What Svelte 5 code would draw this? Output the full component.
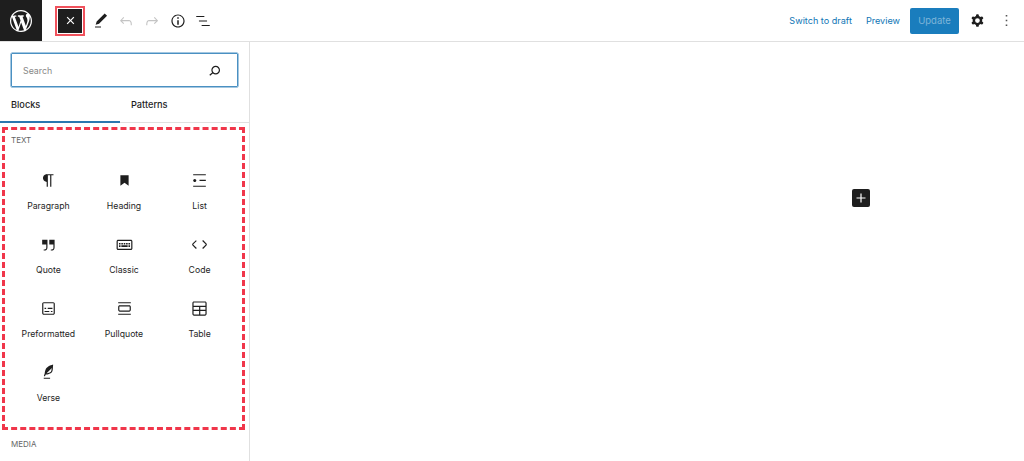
<script>
	const blocks = [
		{ name: 'Paragraph', d: 'M18.3 4H9.9v-.1l-.9.2c-2.3.4-4 2.4-4 4.8s1.7 4.4 4 4.8l.7.1V20h1.5V5.5h2.9V20h1.5V5.5h2.7V4z' },
		{ name: 'Heading', d: 'M6.8 5.500h10.400v13L12 14.900l-5.200 3.600z' },
		{ name: 'List', d: 'M4 4v1.5h16V4H4zm8 8.5h8V11h-8v1.5zM4 20h16v-1.5H4V20zm4-8c0-1.1-.9-2-2-2s-2 .9-2 2 .9 2 2 2 2-.9 2-2z' },
		{ name: 'Quote', d: 'M13 6v6h5.2v4c0 .8-.2 1.4-.5 1.7-.6.6-1.6.6-2.5.5h-.3v1.5h.5c1 0 2.3-.1 3.3-1 .6-.6 1-1.6 1-2.8V6H13zm-9 6h5.2v4c0 .8-.2 1.4-.5 1.7-.6.6-1.6.6-2.5.5h-.3v1.5h.5c1 0 2.3-.1 3.3-1 .6-.6 1-1.6 1-2.8V6H4v6z' },
		{ name: 'Classic', d: 'M20 6H4c-1.1 0-2 .9-2 2v9c0 1.1.9 2 2 2h16c1.1 0 2-.9 2-2V8c0-1.1-.9-2-2-2zm.5 11c0 .3-.2.5-.5.5H4c-.3 0-.5-.2-.5-.5V8c0-.3.2-.5.5-.5h16c.3 0 .5.2.5.5v9zM10 10H8v2h2v-2zm-5 2h2v-2H5v2zm8-2h-2v2h2v-2zm-5 5h8v-2H8v2zm6-3h2v-2h-2v2zm3 0h2v-2h-2v2zm0 3h2v-2h-2v2zM5 15h2v-2H5v2z' },
		{ name: 'Code', d: 'M20.8 10.7l-4.3-4.3-1.1 1.1 4.3 4.3c.1.1.1.3 0 .4l-4.3 4.3 1.1 1.1 4.3-4.3c.7-.8.7-1.9 0-2.6zM4.2 11.8l4.3-4.3-1-1-4.3 4.3c-.7.7-.7 1.8 0 2.5l4.3 4.3 1.1-1.1-4.3-4.3c-.2-.1-.2-.3-.1-.4z' },
		{ name: 'Preformatted', d: 'M18 4H6c-1.1 0-2 .9-2 2v12c0 1.1.9 2 2 2h12c1.1 0 2-.9 2-2V6c0-1.1-.9-2-2-2zm.5 14c0 .3-.2.5-.5.5H6c-.3 0-.5-.2-.5-.5V6c0-.3.2-.5.5-.5h12c.3 0 .5.2.5.5v12zM7 16.5h6V15H7v1.5zm4-4h6V11h-6v1.5zM9 11H7v1.5h2V11zm6 5.5h2V15h-2v1.5z' },
		{ name: 'Pullquote', d: 'M18 8H6c-1.1 0-2 .9-2 2v4c0 1.1.9 2 2 2h12c1.1 0 2-.9 2-2v-4c0-1.1-.9-2-2-2zm.5 6c0 .3-.2.5-.5.5H6c-.3 0-.5-.2-.5-.5v-4c0-.3.2-.5.5-.5h12c.3 0 .5.2.5.5v4zM4 4v1.5h16V4H4zm0 16h16v-1.5H4V20z' },
		{ name: 'Table', d: 'M19 3H5c-1.1 0-2 .9-2 2v14c0 1.1.9 2 2 2h14c1.1 0 2-.9 2-2V5c0-1.1-.9-2-2-2zM5 4.500h14c.3 0 .5.2.5.5v3.500h-15V5c0-.3.2-.5.5-.5zm8 5.500h6.500v3.500H13V10zm-1.500 3.500h-7V10h7v3.500zm-7 5.500v-4h7v4.500H5c-.3 0-.5-.2-.5-.5zm15 .5H13V15h6.500v4c0 .3-.2.5-.5.5z' },
		{ name: 'Verse', d: 'M17.800 2l-.9.3c-.1 0-3.600 1-5.200 2.100C10 5.500 9.300 6.500 8.900 7.100c-.6.900-1.700 4.700-1.700 6.300l-.9 2.300c-.2.400 0 .8.400 1 .1 0 .2.100.3.100.3 0 .6-.2.7-.5l.6-1.500c.3 0 .7-.1 1.200-.2.700-.1 1.400-.3 2.200-.5.800-.2 1.600-.5 2.400-.8.700-.3 1.400-.7 1.900-1.200s.8-1.200 1-1.900c.2-.7.3-1.600.4-2.400.1-.8.100-1.700.2-2.500 0-.8.100-1.500.2-2.100V2zM15.900 7.600c-.1.800-.2 1.500-.3 2.100-.2.600-.4 1-.6 1.300-.3.300-.8.600-1.400.9-.7.300-1.400.500-2.200.8-.6.200-1.300.300-1.800.4L15 7.500c.3-.3.6-.7 1-1.100 0 .4 0 .8-.1 1.200zM6 20h8v-1.500H6V20z' }
	];
</script>

<div class="editor">
	<header class="topbar">
		<div class="logo">
			<svg width="22" height="22" viewBox="0 0 20 20" fill="#fff"><path d="M20 10c0-5.510-4.490-10-10-10C4.480 0 0 4.490 0 10c0 5.520 4.480 10 10 10 5.510 0 10-4.480 10-10zM7.780 15.370L4.370 6.220c.55-.02 1.170-.08 1.170-.08.5-.06.44-1.130-.06-1.110 0 0-1.450.11-2.370.11-.18 0-.37 0-.58-.01C4.120 2.690 6.870 1.110 10 1.110c2.330 0 4.450.87 6.050 2.340-.68-.11-1.650.39-1.650 1.580 0 .74.45 1.360.9 2.100.35.61.55 1.360.55 2.460 0 1.490-1.400 5-1.400 5l-3.030-8.370c.54-.02.82-.17.82-.17.5-.05.44-1.250-.06-1.220 0 0-1.440.12-2.380.12-.87 0-2.330-.12-2.330-.12-.5-.03-.56 1.200-.06 1.220l.92.08 1.260 3.410zM17.410 10c.24-.64.74-1.870.43-4.250.7 1.290 1.050 2.710 1.050 4.250 0 3.290-1.730 6.240-4.400 7.780.97-2.590 1.940-5.200 2.920-7.780zM6.100 18.090C3.120 16.650 1.110 13.530 1.110 10c0-1.300.23-2.480.72-3.590C3.250 10.300 4.670 14.200 6.100 18.090zm4.030-6.630l2.580 6.980c-.86.29-1.760.45-2.710.45-.79 0-1.570-.11-2.290-.33.81-2.380 1.620-4.740 2.420-7.100z"/></svg>
		</div>
		<div class="tools">
			<button class="close" aria-label="Close">
				<svg width="19" height="19" viewBox="0 0 24 24" fill="#fff"><path d="M12 13.060l3.710 3.710 1.060-1.060L13.060 12l3.710-3.710-1.060-1.060L12 10.940 8.290 7.230 7.230 8.290 10.940 12l-3.710 3.710 1.060 1.060z"/></svg>
			</button>
			<svg class="tool" viewBox="0 0 24 24"><path d="M20.100 5.100L16.900 2 6.200 12.700l-1.300 4.400 4.500-1.300L20.100 5.100zM4 20.800h8v-1.500H4v1.500z"/></svg>
			<svg class="tool off" viewBox="0 0 24 24"><path d="M18.300 11.700c-.6-.6-1.400-.9-2.300-.9H6.700l2.900-3.300-1.100-1-4.500 5L8.500 16l1-1-2.700-2.700H16c.5 0 .9.200 1.300.5 1 1 1 3.400 1 4.500v.3h1.500v-.2c0-1.500 0-4.300-1.500-5.700z"/></svg>
			<svg class="tool off" viewBox="0 0 24 24"><path d="M15.600 6.500l-1.100 1 2.900 3.300H8c-.9 0-1.700.3-2.300.9-1.400 1.500-1.400 4.200-1.400 5.600v.2h1.500v-.3c0-1.100 0-3.500 1-4.500.3-.3.7-.5 1.300-.5h9.200L14.500 15l1.100 1.100 4.600-4.600-4.600-5z"/></svg>
			<svg class="tool" viewBox="0 0 24 24"><path d="M12 3.200c-4.800 0-8.800 3.900-8.800 8.800 0 4.800 3.900 8.800 8.800 8.800 4.800 0 8.800-3.900 8.800-8.800 0-4.800-4-8.800-8.800-8.800zm0 16c-4 0-7.200-3.300-7.200-7.200C4.800 8 8 4.800 12 4.800s7.200 3.300 7.200 7.200c0 4-3.200 7.200-7.200 7.200zM11 17h2v-6h-2v6zm0-8h2V7h-2v2z"/></svg>
			<svg class="tool" viewBox="0 0 24 24"><path d="M13.800 5.200H3v1.500h10.800V5.200zm-3.600 12v1.500H21v-1.500H10.200zm7.200-6H6.600v1.500h10.800v-1.500z"/></svg>
		</div>
		<div class="actions">
			<span class="link">Switch to draft</span>
			<span class="link preview">Preview</span>
			<button class="update">Update</button>
			<svg class="side cog" viewBox="0 0 24 24"><path fill-rule="evenodd" d="M10.289 4.836A1 1 0 0111.275 4h1.306a1 1 0 01.987.836l.244 1.466c.787.26 1.503.679 2.108 1.218l1.393-.522a1 1 0 011.216.437l.653 1.130a1 1 0 01-.23 1.273l-1.148.944a6.025 6.025 0 010 2.435l1.149.946a1 1 0 01.23 1.272l-.653 1.130a1 1 0 01-1.216.437l-1.394-.522c-.605.54-1.320.958-2.108 1.218l-.244 1.466a1 1 0 01-.987.836h-1.306a1 1 0 01-.986-.836l-.244-1.466a5.995 5.995 0 01-2.108-1.218l-1.394.522a1 1 0 01-1.217-.436l-.653-1.131a1 1 0 01.23-1.272l1.149-.946a6.026 6.026 0 010-2.435l-1.148-.944a1 1 0 01-.23-1.272l.653-1.131a1 1 0 011.217-.437l1.393.522a5.994 5.994 0 012.108-1.218l.244-1.466zM14.929 12a3 3 0 11-6 0 3 3 0 016 0z"/></svg>
			<svg class="side more" viewBox="0 0 24 24"><path d="M13 19h-2v-2h2v2zm0-6h-2v-2h2v2zm0-6h-2V5h2v2z"/></svg>
		</div>
	</header>

	<div class="body">
		<aside class="inserter">
			<div class="search">
				<span>Search</span>
				<svg width="19" height="19" viewBox="0 0 24 24" fill="#1e1e1e"><path d="M13.500 6C10.500 6 8 8.500 8 11.500c0 1.100.3 2.100.9 3l-3.400 3 1 1.100 3.400-2.900c1 .9 2.200 1.400 3.600 1.400 3 0 5.500-2.500 5.500-5.500C19 8.500 16.500 6 13.500 6zm0 9.500c-2.200 0-4-1.800-4-4s1.800-4 4-4 4 1.800 4 4-1.800 4-4 4z"/></svg>
			</div>
			<div class="tabs">
				<div class="tab active">Blocks</div>
				<div class="tab">Patterns</div>
			</div>
			<section class="text-blocks">
				<h2>Text</h2>
				<div class="grid">
					{#each blocks as block}
						<div class="block">
							<svg width="19" height="19" viewBox="0 0 24 24" fill="#1e1e1e" fill-rule="evenodd"><path d={block.d}/></svg>
							<span>{block.name}</span>
						</div>
					{/each}
				</div>
			</section>
			<h2 class="media">Media</h2>
		</aside>
		<main class="canvas">
			<button class="add" aria-label="Add block">
				<svg width="18" height="18" viewBox="0 0 24 24" fill="#fff"><path d="M18 11.200h-5.200V6h-1.600v5.200H6v1.600h5.200V18h1.600v-5.200H18z"/></svg>
			</button>
		</main>
	</div>
</div>

<style>
	:global(body) {
		background: #fff;
	}
	.editor {
		height: 461px;
		overflow: hidden;
		display: flex;
		flex-direction: column;
		font-family: Inter, 'Liberation Sans', sans-serif;
		font-size: 8.7px;
		color: #1e1e1e;
	}
	button {
		border: none;
		padding: 0;
		font: inherit;
		display: flex;
		align-items: center;
		justify-content: center;
	}
	.topbar {
		height: 42px;
		flex: none;
		display: flex;
		align-items: center;
		border-bottom: 1px solid #e0e0e0;
		box-sizing: border-box;
	}
	.logo {
		width: 42px;
		height: 41px;
		background: #1e1e1e;
		display: flex;
		align-items: center;
		justify-content: center;
	}
	.tools {
		display: flex;
		align-items: center;
		margin-left: 16px;
		gap: 7.7px;
	}
	.close {
		width: 24px;
		height: 24px;
		background: #1e1e1e;
		outline: 2px solid #f0525c;
		outline-offset: 1px;
		margin-right: 2px;
	}
	.tool {
		width: 18px;
		height: 18px;
		fill: #1e1e1e;
	}
	.tool.off {
		fill: #c4c4c4;
	}
	.actions {
		margin-left: auto;
		display: flex;
		align-items: center;
	}
	.link {
		color: #0f75b5;
		font-size: 9.1px;
	}
	.preview {
		margin-left: 14px;
	}
	.update {
		width: 49px;
		height: 26px;
		margin-left: 10px;
		background: #1a7dbd;
		color: #7fb5d9;
		border-radius: 2px;
		font-size: 9.5px;
	}
	.side {
		width: 19px;
		height: 19px;
		fill: #1e1e1e;
	}
	.cog {
		margin-left: 9px;
	}
	.more {
		margin-left: 10px;
		margin-right: 8px;
		fill: #555;
	}
	.body {
		flex: 1;
		display: flex;
		min-height: 0;
	}
	.inserter {
		width: 250px;
		flex: none;
		box-sizing: border-box;
		border-right: 1px solid #e0e0e0;
		padding-top: 11px;
	}
	.search {
		margin: 0 11px;
		height: 34px;
		box-sizing: border-box;
		border: 1px solid #4a90c2;
		box-shadow: 0 0 0 0.5px #4a90c2;
		border-radius: 1px;
		display: flex;
		align-items: center;
		justify-content: space-between;
		padding: 0 13px 0 11px;
		color: #888;
		font-size: 8.8px;
	}
	.tabs {
		display: flex;
		height: 36px;
		border-bottom: 1px solid #e0e0e0;
		box-sizing: border-box;
		margin-bottom: 4px;
		font-weight: 500;
		font-size: 9.2px;
	}
	.tab {
		width: 120px;
		padding-left: 11px;
		box-sizing: border-box;
		line-height: 36px;
		margin-bottom: -1px;
	}
	.tab.active {
		border-bottom: 2px solid #2a78b0;
	}
	.text-blocks {
		margin: 0 4px 0 2px;
		height: 303px;
		box-sizing: border-box;
		border: 3px dashed #f0364a;
		padding: 5px 0 0 6px;
	}
	h2 {
		margin: 0;
		font-size: 8px;
		font-weight: 400;
		text-transform: uppercase;
		color: #666;
		line-height: 10px;
	}
	.grid {
		display: grid;
		grid-template-columns: repeat(3, 75.6px);
		grid-auto-rows: 64px;
		margin-top: 18px;
		margin-left: -0.4px;
	}
	.block {
		display: flex;
		flex-direction: column;
		align-items: center;
		gap: 11px;
		padding-top: 8px;
	}
	.media {
		margin: 9px 0 0 11px;
	}
	.canvas {
		flex: 1;
		padding: 147px 0 0 602px;
	}
	.add {
		width: 18px;
		height: 18px;
		background: #1e1e1e;
		border-radius: 2px;
	}
</style>
